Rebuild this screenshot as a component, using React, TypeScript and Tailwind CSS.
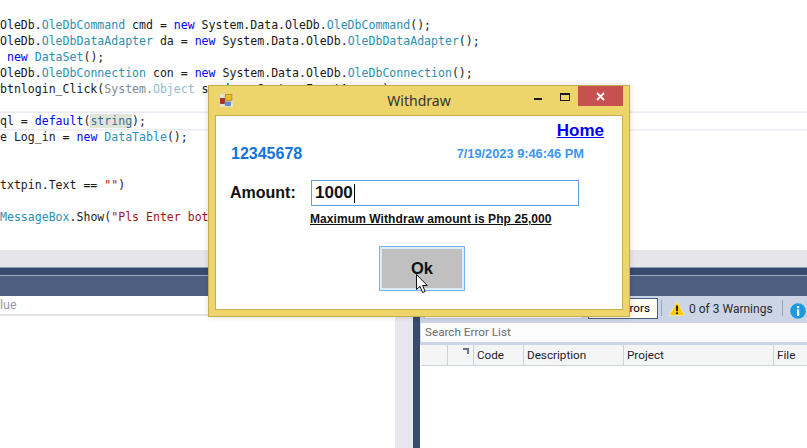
const kw = "text-[#0000ff]";
const ty = "text-[#2b91af]";
const dim = "text-[#7f8a94]";
const dimTy = "text-[#8fbccb]";
const str = "text-[#a31515]";

function CodeLine({ children, active }: { children?: React.ReactNode; active?: boolean }) {
  return (
    <div
      className={
        "h-4 whitespace-pre" +
        (active ? " shadow-[0_-1px_0_#eaeaf2,0_-2px_0_#f4f4f8,0_1px_0_#eaeaf2,0_2px_0_#f4f4f8]" : "")
      }
    >
      {children}
    </div>
  );
}

function CodeArea() {
  return (
    <div className="h-[250px] shrink-0 overflow-hidden bg-white pt-[17px] font-['DejaVu_Sans_Mono',monospace] text-[11.55px] leading-4 text-[#1a1a1a]">
      <CodeLine>
        OleDb.<span className={ty}>OleDbCommand</span> cmd = <span className={kw}>new</span> System.Data.OleDb.
        <span className={ty}>OleDbCommand</span>();
      </CodeLine>
      <CodeLine>
        OleDb.<span className={ty}>OleDbDataAdapter</span> da = <span className={kw}>new</span> System.Data.OleDb.
        <span className={ty}>OleDbDataAdapter</span>();
      </CodeLine>
      <CodeLine>
        {" "}
        <span className={kw}>new</span> <span className={ty}>DataSet</span>();
      </CodeLine>
      <CodeLine>
        OleDb.<span className={ty}>OleDbConnection</span> con = <span className={kw}>new</span> System.Data.OleDb.
        <span className={ty}>OleDbConnection</span>();
      </CodeLine>
      <CodeLine>
        btnlogin_Click(<span className={dim}>System.</span>
        <span className={dimTy}>Object</span> sender, System.EventArgs e)
      </CodeLine>
      <CodeLine />
      <CodeLine active>
        ql = <span className={kw}>default</span>(<span className="bg-[#dfe6d8] text-[#3f6f8f]">string</span>);
      </CodeLine>
      <CodeLine>
        e Log_in = <span className={kw}>new</span> <span className={ty}>DataTable</span>();
      </CodeLine>
      <CodeLine />
      <CodeLine />
      <CodeLine>
        txtpin.Text == <span className={str}>""</span>)
      </CodeLine>
      <CodeLine />
      <CodeLine>
        <span className={ty}>MessageBox</span>.Show(<span className={str}>"Pls Enter both fields"</span>);
      </CodeLine>
    </div>
  );
}

function WarningIcon() {
  return (
    <svg className="shrink-0" width="16" height="15" viewBox="0 0 16 15">
      <path d="M8 0.5 L15.7 14.5 L0.3 14.5 Z" fill="#ffcc00" stroke="#fff4c2" strokeWidth="0.6" />
      <rect x="7.1" y="4.5" width="1.9" height="5.6" fill="#1a1a1a" />
      <rect x="7.1" y="11.3" width="1.9" height="1.9" fill="#1a1a1a" />
    </svg>
  );
}

function InfoIcon() {
  return (
    <svg width="16" height="16" viewBox="0 0 16 16">
      <circle cx="8" cy="8" r="7.8" fill="#1b9ae0" />
      <rect x="7" y="3" width="2.2" height="2.2" fill="#fff" />
      <rect x="7" y="6.4" width="2.2" height="6.6" fill="#fff" />
    </svg>
  );
}

function ErrorList() {
  const cols = [
    { w: "w-[27px]", label: "" },
    { w: "w-[26px]", label: "", sort: true },
    { w: "w-[50px]", label: "Code" },
    { w: "w-[100px]", label: "Description" },
    { w: "w-[150px]", label: "Project" },
    { w: "flex-1", label: "File" },
  ];
  return (
    <div className="flex min-w-0 flex-1 flex-col bg-white">
      <div className="flex h-[27px] shrink-0 items-start bg-[#ccd5e6] pt-[2px] pl-1">
        <div className="mt-[-2px] h-[23px] w-[159px] shrink-0 border border-[#c2cad8] bg-white" />
        <div className="ml-[5px] flex h-[21px] w-[70px] shrink-0 items-center justify-end border border-[#4d6082] bg-[#fffdf2] pr-[7px]">
          Errors
        </div>
        <div className="mt-[2px] ml-[3px] h-4 w-px shrink-0 bg-[#9aa5ba]" />
        <div className="ml-[7px] flex h-[21px] w-[103px] shrink-0 items-center gap-1">
          <WarningIcon />
          <span className="text-[12px] whitespace-nowrap text-[#2b2b2b]">0 of 3 Warnings</span>
        </div>
        <div className="mt-[2px] ml-[10px] h-4 w-px shrink-0 bg-[#9aa5ba]" />
        <div className="mt-[5px] ml-[7px] shrink-0">
          <InfoIcon />
        </div>
      </div>
      <div className="flex h-[19px] shrink-0 items-center border-l border-[#ccd5e6] bg-[#fcfcfc] pt-px pl-1 text-[#6d6d6d]">
        Search Error List
      </div>
      <div className="h-[3px] shrink-0 bg-[#ccd5e6]" />
      <div className="ml-px flex h-[21px] shrink-0 border-b border-[#ccd2de] bg-[#f5f5f5] text-[#1e1e2e]">
        {cols.map((c, i) => (
          <div key={i} className={c.w + " relative flex items-center border-r border-[#ccd2de] pt-px pl-[3px] last:border-r-0"}>
            {c.label}
            {c.sort && (
              <svg className="absolute top-[3px] right-[4px]" width="6" height="6" viewBox="0 0 6 6">
                <path d="M0 0H6V6H4V2H0Z" fill="#6b7280" />
              </svg>
            )}
          </div>
        ))}
      </div>
    </div>
  );
}

function BottomPanels() {
  return (
    <div className="flex min-h-0 flex-1 flex-col font-['Roboto',sans-serif] text-[11.7px]">
      <div className="h-[17px] shrink-0 bg-[#e6e6ea]" />
      <div className="h-[8px] shrink-0 border-t border-[#8d9bb8] bg-[#364b6d]" />
      <div className="h-px shrink-0 bg-[#9aa8c4]" />
      <div className="h-[20px] shrink-0 bg-[#4d6082]" />
      <div className="flex min-h-0 flex-1">
        <div className="w-[395px] shrink-0 bg-white">
          <div className="flex h-5 items-center border-b-2 border-[#e6e6e6] text-[12.5px] text-[#9a9aa8]">lue</div>
        </div>
        <div className="w-[18px] shrink-0 bg-[#e7e7ed]" />
        <div className="w-[7px] shrink-0 bg-[#364b6d]" />
        <ErrorList />
      </div>
    </div>
  );
}

function AppIcon() {
  return (
    <svg width="13" height="13" viewBox="0 0 13 13">
      <rect width="13" height="13" fill="#e6e3d2" />
      <path d="M0 4.3H13M0 8.6H13M4.3 0V13M8.6 0V13" stroke="#cfc9a8" strokeWidth="0.6" />
      <rect x="0.5" y="4.5" width="4" height="5" fill="#c9201c" stroke="#7b2b2b" strokeWidth="0.7" />
      <rect x="5.5" y="0.5" width="6.5" height="6" fill="#f2bb1e" stroke="#9a7a1e" strokeWidth="0.7" />
      <rect x="5.5" y="8" width="5" height="3.5" fill="#5f8fd8" stroke="#3f66a8" strokeWidth="0.6" />
    </svg>
  );
}

function WithdrawWindow() {
  return (
    <div className="absolute top-[85px] left-[208px] flex h-[232px] w-[422px] flex-col border border-[#c4ae52] bg-[#edd56b] px-[6px] pb-[6px] font-['Liberation_Sans',sans-serif] shadow-[0_0_6px_rgba(0,0,0,0.15)]">
      <div className="relative flex h-[29px] shrink-0 items-start">
        <div className="mt-2 ml-[5px]">
          <AppIcon />
        </div>
        <div className="absolute top-[5px] left-0 w-[408px] text-center font-['Noto_Sans',sans-serif] text-[14px] leading-5 text-[#333]">
          Withdraw
        </div>
        <div className="ml-auto flex h-[20px] items-start">
          <div className="mt-[12px] mr-[18px] h-[2px] w-[8px] bg-[#1a1a1a]" />
          <div className="mt-[7px] mr-2 h-[8px] w-[10px] border border-t-2 border-[#1a1a1a]" />
          <div className="flex h-[20px] w-[45px] items-center justify-center bg-[#c75050]">
            <svg width="9" height="9" viewBox="0 0 9 9">
              <path d="M1 1L8 8M8 1L1 8" stroke="#fff" strokeWidth="1.8" />
            </svg>
          </div>
        </div>
      </div>
      <div className="flex min-h-0 flex-1 flex-col border border-[#c4ae52] bg-white pr-[18px] pl-[15px]">
        <div className="mt-[5px] flex justify-end">
          <a className="text-[17px] leading-5 font-bold text-[#0000ff] underline">Home</a>
        </div>
        <div className="mt-[3px] flex items-center justify-between pr-[20px]">
          <span className="text-[16px] leading-5 font-bold text-[#0f74dc]">12345678</span>
          <span className="text-[12.8px] leading-4 font-bold text-[#3b96f5]">7/19/2023 9:46:46 PM</span>
        </div>
        <div className="mt-[16px] flex items-center">
          <span className="ml-[-1px] w-[81px] text-[16px] font-bold text-[#111]">Amount:</span>
          <div className="flex h-[26px] w-[268px] items-center border border-[#5b9fe6] pl-[3px] text-[17px] font-bold text-[#111]">
            1000
            <span className="ml-px h-[19px] w-px bg-black" />
          </div>
        </div>
        <div className="mt-[5px] ml-[79px] text-[12px] leading-4 font-bold tracking-[0.08px] whitespace-nowrap text-[#111] underline">
          Maximum Withdraw amount is Php 25,000
        </div>
        <div className="mt-[19px] ml-[148px] flex h-[45px] w-[86px] items-center justify-center border border-[#7cb5ec] bg-[#c0c0c0] text-[16.5px] font-bold text-[#111] shadow-[inset_0_0_0_2px_#dcebfb]">
          Ok
        </div>
      </div>
    </div>
  );
}

function Cursor() {
  return (
    <svg className="absolute top-[274px] left-[416px]" width="13" height="20" viewBox="0 0 13 20">
      <path
        d="M0.5 0.5V15.5L4 12.3L6.6 18.6L9.2 17.5L6.6 11.5H11.2Z"
        fill="#fff"
        stroke="#111"
        strokeWidth="1"
        strokeLinejoin="round"
      />
    </svg>
  );
}

export default function App() {
  return (
    <div className="relative flex h-[448px] w-[807px] flex-col overflow-hidden bg-white">
      <CodeArea />
      <BottomPanels />
      <WithdrawWindow />
      <Cursor />
    </div>
  );
}
